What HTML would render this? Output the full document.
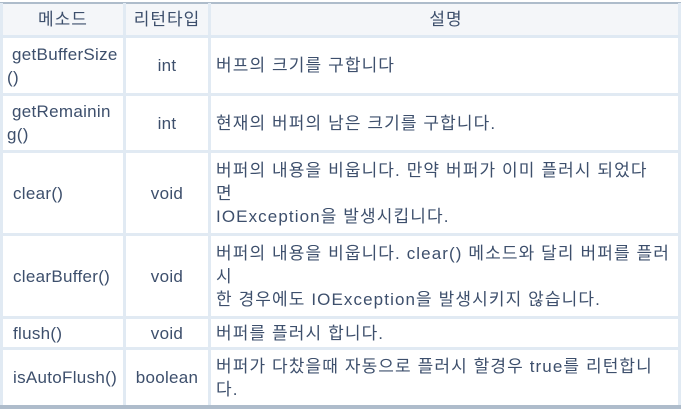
<!DOCTYPE html><html><head><meta charset="utf-8"><style>
body{margin:0;width:681px;height:409px;background:#fff;position:relative;overflow:hidden;font-family:"Liberation Sans","Noto Sans CJK KR",sans-serif;font-size:17px;color:#3d4f6c}
.c{position:absolute;display:flex;align-items:center;line-height:23px;box-sizing:border-box;white-space:nowrap}
.h{background:#f4f6f9;justify-content:center;letter-spacing:1px}
.m{padding-left:10px;letter-spacing:0.3px}.r{justify-content:center;letter-spacing:0.3px}.d{padding-left:5px;letter-spacing:1.1px}
.vl{position:absolute;top:3px;bottom:4px;width:3px;background:#e1eaf3}
.hl{position:absolute;left:0;right:0;height:3px;background:#e1eaf3}
</style></head><body>
<div style="position:absolute;left:0;right:0;top:2px;height:2px;background:#aebccb"></div>
<div style="position:absolute;left:0;right:0;top:405px;height:4px;background:#aebccb"></div>
<div class="c h" style="left:3px;width:120px;top:4px;height:31px">메소드</div>
<div class="c h" style="left:126px;width:82px;top:4px;height:31px">리턴타입</div>
<div class="c h" style="left:211px;width:470px;top:4px;height:31px">설명</div>

<div class="c m" style="left:3px;width:120px;top:38px;height:55px;padding-left:4px">&nbsp;getBufferSize<br>()</div>
<div class="c r" style="left:126px;width:82px;top:38px;height:55px">int</div>
<div class="c d" style="left:211px;width:470px;top:38px;height:55px">버프의 크기를 구합니다</div>

<div class="c m" style="left:3px;width:120px;top:96px;height:54px;padding-left:4px">&nbsp;getRemainin<br>g()</div>
<div class="c r" style="left:126px;width:82px;top:96px;height:54px">int</div>
<div class="c d" style="left:211px;width:470px;top:96px;height:54px">현재의 버퍼의 남은 크기를 구합니다.</div>

<div class="c m" style="left:3px;width:120px;top:153px;height:80px">clear()</div>
<div class="c r" style="left:126px;width:82px;top:153px;height:80px">void</div>
<div class="c d" style="left:211px;width:470px;top:153px;height:80px">버퍼의 내용을 비웁니다. 만약 버퍼가 이미 플러시 되었다<br>면<br>IOException을 발생시킵니다.</div>

<div class="c m" style="left:3px;width:120px;top:236px;height:80px">clearBuffer()</div>
<div class="c r" style="left:126px;width:82px;top:236px;height:80px">void</div>
<div class="c d" style="left:211px;width:470px;top:236px;height:80px">버퍼의 내용을 비웁니다. clear() 메소드와 달리 버퍼를 플러<br>시<br>한 경우에도 IOException을 발생시키지 않습니다.</div>

<div class="c m" style="left:3px;width:120px;top:319px;height:28px">flush()</div>
<div class="c r" style="left:126px;width:82px;top:319px;height:28px">void</div>
<div class="c d" style="left:211px;width:470px;top:319px;height:28px">버퍼를 플러시 합니다.</div>

<div class="c m" style="left:3px;width:120px;top:350px;height:55px">isAutoFlush()</div>
<div class="c r" style="left:126px;width:82px;top:350px;height:55px">boolean</div>
<div class="c d" style="left:211px;width:470px;top:350px;height:55px">버퍼가 다찼을때 자동으로 플러시 할경우 true를 리턴합니<br>다.</div>

<div class="vl" style="left:0"></div><div class="vl" style="left:123px"></div><div class="vl" style="left:208px"></div><div class="vl" style="left:678px"></div>
<div class="hl" style="top:35px;background:#dfe9f3"></div>
<div class="hl" style="top:93px"></div><div class="hl" style="top:150px"></div><div class="hl" style="top:233px"></div><div class="hl" style="top:316px"></div><div class="hl" style="top:347px"></div>
</body></html>
